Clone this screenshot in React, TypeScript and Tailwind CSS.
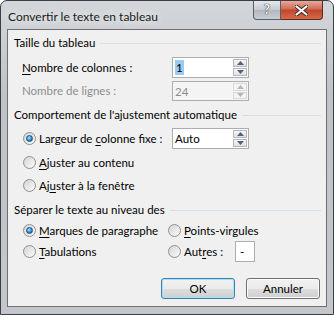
import React from 'react';

const Radio = ({ checked }: { checked?: boolean }) => (
  <span className="flex h-[13px] w-[13px] shrink-0 items-center justify-center rounded-full border border-[#8e8f8f] bg-[linear-gradient(135deg,#d4d4d4,#fbfbfb)]">
    {checked && (
      <span className="h-[7px] w-[7px] rounded-full border border-[#1b4f83] bg-[radial-gradient(circle_at_40%_35%,#aee6fb,#2d8fd0_55%,#124f8a)]" />
    )}
  </span>
);

const Arrow = ({ up, disabled }: { up?: boolean; disabled?: boolean }) => (
  <svg width="7" height="4" viewBox="0 0 7 4">
    <path d={up ? 'M3.5 0L7 4H0z' : 'M0 0H7L3.5 4z'} fill={disabled ? '#b5b5b5' : '#4d6185'} />
  </svg>
);

const Spin = ({ value, disabled, selected }: { value: string; disabled?: boolean; selected?: boolean }) => (
  <div
    className={`flex h-full w-[77px] items-stretch border border-[#abadb3] ${disabled ? 'bg-[#f4f4f4] text-[#8d8d8d]' : 'bg-white text-black'}`}
  >
    <div className="flex flex-1 items-center pl-[2px]">
      <span className={selected ? 'bg-[#9ccaf0] px-[1px] leading-[15px]' : 'leading-[15px]'}>{value}</span>
    </div>
    <div className="flex w-[16px] flex-col gap-[1px] p-[1px]">
      {[true, false].map((up) => (
        <div
          key={String(up)}
          className={`flex flex-1 items-center justify-center border ${disabled ? 'border-[#d9d9d9] bg-[#f4f4f4]' : 'border-[#b7b7b7] bg-[linear-gradient(180deg,#f7f7f7,#e0e0e0)]'}`}
        >
          <Arrow up={up} disabled={disabled} />
        </div>
      ))}
    </div>
  </div>
);

const Header = ({ text, className = '' }: { text: string; className?: string }) => (
  <div className={`flex h-[16px] items-center gap-[5px] pl-[6px] pr-[5px] ${className}`}>
    <span className="whitespace-nowrap">{text}</span>
    <div className="h-px flex-1 bg-[#d6dee6]" />
  </div>
);

const U = ({ children }: { children: React.ReactNode }) => <span className="underline underline-offset-2">{children}</span>;

const Button = ({ children, primary }: { children: React.ReactNode; primary?: boolean }) => (
  <div
    className={`flex h-[21px] w-[74px] items-center justify-center rounded-[3px] border ${primary ? 'border-[#3c7fb1] shadow-[inset_0_0_0_1px_#a6e2f7]' : 'border-[#707070] shadow-[inset_0_0_0_1px_#fbfbfb]'} bg-[linear-gradient(180deg,#f2f2f2_0%,#ebebeb_50%,#dddddd_51%,#cfcfcf_100%)]`}
  >
    {children}
  </div>
);

export default function App() {
  return (
    <div className="h-[315px] w-[334px] whitespace-nowrap bg-white font-['Lato',sans-serif] text-[11.5px] text-black">
      <div className="flex h-full w-full flex-col rounded-t-[7px] border border-[#3a3d41] bg-[linear-gradient(180deg,#d3d6da,#bfc3c8_30%,#c3c6ca)] px-[6px] pb-[7px]">
        {/* title bar */}
        <div className="flex h-[28px] items-start justify-between">
          <span className="ml-[1px] mt-[7px] text-[12px] text-[#1a1a1a] [text-shadow:0_0_8px_#fff,0_0_14px_#fff]">Convertir le texte en tableau</span>
          <div className="mr-[4px] flex h-[19px]">
            <div className="flex w-[28px] items-center justify-center rounded-bl-[4px] border border-t-0 border-[#5a5f66] bg-[linear-gradient(180deg,#e6e8eb,#c5c9ce_50%,#b3b8be_51%,#c9ced3)] text-[13px] font-bold text-white [text-shadow:0_0_1px_#222,0_0_1px_#222]">
              ?
            </div>
            <div className="flex w-[42px] items-center justify-center rounded-br-[4px] border border-l-0 border-t-0 border-[#5a2a22] bg-[linear-gradient(180deg,#e9a99a,#cf6a55_45%,#c2452d_50%,#d66a48)]">
              <svg width="13" height="11" viewBox="0 0 13 11">
                <path d="M1.5 1.5L11.5 9.5M11.5 1.5L1.5 9.5" stroke="#3a2a2a" strokeWidth="4" strokeLinecap="round" />
                <path d="M1.5 1.5L11.5 9.5M11.5 1.5L1.5 9.5" stroke="#fff" strokeWidth="2.2" strokeLinecap="round" />
              </svg>
            </div>
          </div>
        </div>

        {/* client area */}
        <div className="flex flex-1 flex-col border border-[#6f6f6f] bg-[#f0f0f0]">
          <Header text="Taille du tableau" className="mt-[5px]" />
          <div className="mt-[6px] flex h-[21px] items-center pl-[14px]">
            <span className="w-[150px]">
              <U>N</U>ombre de colonnes :
            </span>
            <Spin value="1" selected />
          </div>
          <div className="mt-[3px] flex h-[20px] items-center pl-[14px] text-[#8d8d8d]">
            <span className="w-[150px]">Nombre de lignes :</span>
            <Spin value="24" disabled />
          </div>

          <Header text="Comportement de l'ajustement automatique" className="mt-[6px]" />
          <div className="mt-[5px] flex h-[21px] items-center pl-[15px]">
            <div className="flex w-[149px] items-center gap-[3px]">
              <Radio checked />
              <span>
                Largeur de <U>c</U>olonne fixe :
              </span>
            </div>
            <Spin value="Auto" />
          </div>
          <div className="mt-[3px] flex h-[21px] items-center gap-[3px] pl-[15px]">
            <Radio />
            <span>
              <U>A</U>juster au contenu
            </span>
          </div>
          <div className="mt-[2px] flex h-[21px] items-center gap-[3px] pl-[15px]">
            <Radio />
            <span>
              Aj<U>u</U>ster à la fenêtre
            </span>
          </div>

          <Header text="Séparer le texte au niveau des" className="mt-[6px]" />
          <div className="mt-[2px] flex h-[21px] items-center pl-[15px]">
            <div className="flex w-[145px] items-center gap-[3px]">
              <Radio checked />
              <span>
                <U>M</U>arques de paragraphe
              </span>
            </div>
            <div className="flex items-center gap-[3px]">
              <Radio />
              <span>
                <U>P</U>oints-virgules
              </span>
            </div>
          </div>
          <div className="flex h-[21px] items-center pl-[15px]">
            <div className="flex w-[145px] items-center gap-[3px]">
              <Radio />
              <span>
                <U>T</U>abulations
              </span>
            </div>
            <div className="flex items-center gap-[3px]">
              <Radio />
              <span className="w-[51px]">
                Aut<U>r</U>es :
              </span>
            </div>
            <div className="flex h-full w-[20px] items-center border border-[#abadb3] bg-white pl-[4px]">-</div>
          </div>

          <div className="mt-[16px] flex justify-end gap-[11px] pr-[6px]">
            <Button primary>OK</Button>
            <Button>Annuler</Button>
          </div>
        </div>
      </div>
    </div>
  );
}
